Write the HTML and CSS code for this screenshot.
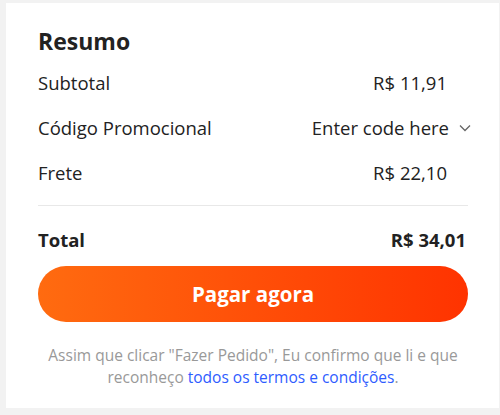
FILE: index.html
```html
<!DOCTYPE html>
<html lang="pt-br">
<head>
    <meta charset="UTF-8">
    <meta name="viewport" content="width=device-width, initial-scale=1.0">
    <title>Resumo do pedido</title>
    <link rel="stylesheet" href="styles.css">
</head>
<body>
    <div class="summary-card">
        <h2 class="summary-title">Resumo</h2>
        <div class="summary-row">
            <span>Subtotal</span>
            <span class="row-value">R$ 11,91</span>
        </div>
        <div class="summary-row">
            <span>Código Promocional</span>
            <span class="promo-select">
                Enter code here
                <svg class="chevron" width="14" height="14" viewBox="0 0 14 14">
                    <path d="M2 4.5 L7 9.5 L12 4.5" fill="none" stroke="#666" stroke-width="1.3"/>
                </svg>
            </span>
        </div>
        <div class="summary-row">
            <span>Frete</span>
            <span class="row-value">R$ 22,10</span>
        </div>
        <div class="divider"></div>
        <div class="total-row">
            <span>Total</span>
            <span>R$ 34,01</span>
        </div>
        <button class="pay-button">Pagar agora</button>
        <p class="terms">Assim que clicar "Fazer Pedido", Eu confirmo que li e que reconheço <a href="#">todos os termos e condições</a>.</p>
    </div>
</body>
</html>
```

FILE: styles.css
```css
body {
    font-family: "Open Sans", Arial, sans-serif;
    background-color: #f2f2f2;
    margin: 0;
    padding: 3px 1px 7px 6px;
    color: #222;
}
.summary-card {
    background: white;
    height: 405px;
    box-sizing: border-box;
    padding: 23px 31px 20px 32px;
}
.summary-title {
    margin: 0 0 3px 0;
    font-size: 23px;
    line-height: 31px;
    font-weight: bold;
}
.summary-row {
    display: flex;
    justify-content: space-between;
    align-items: center;
    height: 45px;
    font-size: 18.5px;
}
.row-value {
    margin-right: 21px;
}
.promo-select {
    display: flex;
    align-items: center;
    gap: 9px;
    margin-right: -4px;
}
.divider {
    height: 1px;
    background: #e8e8e8;
    margin-top: 10px;
}
.total-row {
    display: flex;
    justify-content: space-between;
    font-size: 18.5px;
    font-weight: bold;
    line-height: 24px;
    padding: 22px 2px 14px 0;
}
.pay-button {
    display: block;
    width: 100%;
    height: 56px;
    border: none;
    border-radius: 28px;
    background: linear-gradient(90deg, #ff6b10, #ff3300);
    color: white;
    font-family: inherit;
    font-size: 20.5px;
    font-weight: bold;
    cursor: pointer;
}
.terms {
    margin: 22px 0 0 0;
    padding: 0 8px;
    text-align: center;
    font-size: 15.5px;
    line-height: 22px;
    color: #999;
}
.terms a {
    color: #2e5cff;
    text-decoration: none;
}
```
